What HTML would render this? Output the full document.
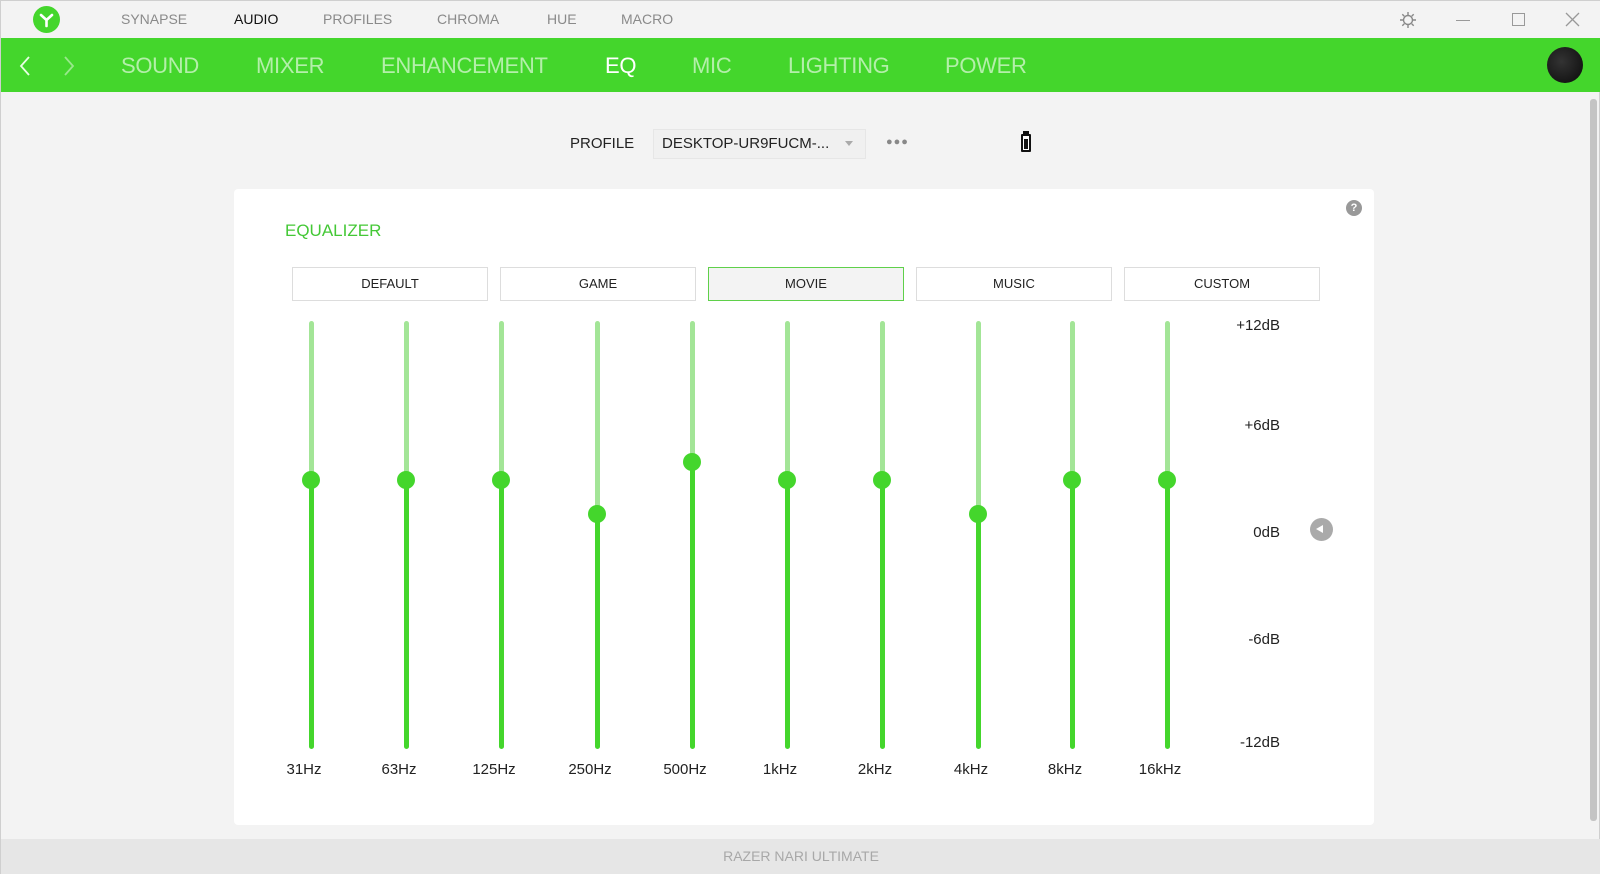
<!DOCTYPE html>
<html><head><meta charset="utf-8"><style>
*{margin:0;padding:0;box-sizing:border-box}
body{width:1600px;height:874px;background:#f3f3f3;font-family:"Liberation Sans",sans-serif;position:relative;overflow:hidden;border:1px solid #cfcfcf}
.a{position:absolute;white-space:nowrap}
.tb{top:0;left:0;width:1600px;height:37px;background:#f3f3f3}
.tt{top:10px;font-size:14px;color:#8a8a8a}
.gb{top:37px;left:0;width:1600px;height:54px;background:#44d62c}
.gt{top:52px;font-size:22px;color:rgba(255,255,255,.6);letter-spacing:-0.3px}
.card{left:233px;top:188px;width:1140px;height:636px;background:#fff;border-radius:4px}
.btn{top:266px;width:196px;height:34px;border:1.5px solid #ddd;background:#fff;font-size:13px;color:#222;text-align:center;line-height:31px}
.tr{width:5px;border-radius:3px}
.kn{width:18px;height:18px;border-radius:50%;background:#44d62c}
.lb{font-size:15px;color:#222;top:760px;width:60px;text-align:center}
.db{font-size:15px;color:#222;right:319px;text-align:right}
</style></head><body>
<div class="a tb"></div>
<div class="a" style="left:32px;top:5px;width:27px;height:27px;border-radius:50%;background:#44d62c"></div>
<svg class="a" style="left:36px;top:9px" width="19" height="19" viewBox="0 0 19 19"><path d="M9.5 10 L9.5 16 M9.5 10 L4 5 M9.5 10 L15 5" stroke="#fff" stroke-width="2.6" fill="none" stroke-linecap="round"/></svg>
<div class="a tt" style="left:120px">SYNAPSE</div>
<div class="a tt" style="left:233px;color:#111">AUDIO</div>
<div class="a tt" style="left:322px">PROFILES</div>
<div class="a tt" style="left:436px">CHROMA</div>
<div class="a tt" style="left:546px">HUE</div>
<div class="a tt" style="left:620px">MACRO</div>
<svg class="a" style="left:1398px;top:10px" width="18" height="18" viewBox="0 0 18 18"><circle cx="9" cy="9" r="4.5" fill="none" stroke="#888" stroke-width="1.4"/><path d="M9 1v3M9 14v3M1 9h3M14 9h3M3.3 3.3l2 2M12.7 12.7l2 2M3.3 14.7l2-2M12.7 5.3l2-2" stroke="#888" stroke-width="1.4"/></svg>
<div class="a" style="left:1455px;top:19px;width:14px;height:1px;background:#999"></div>
<div class="a" style="left:1511px;top:12px;width:13px;height:13px;border:1.2px solid #999"></div>
<svg class="a" style="left:1564px;top:11px" width="15" height="15"><path d="M1 1L14 14M14 1L1 14" stroke="#999" stroke-width="1.3"/></svg>
<div class="a gb"></div>
<svg class="a" style="left:17px;top:54px" width="14" height="22"><path d="M11 2L3 11L11 20" stroke="#e8ffe4" stroke-width="1.8" fill="none"/></svg>
<svg class="a" style="left:61px;top:54px" width="14" height="22"><path d="M3 2L11 11L3 20" stroke="rgba(255,255,255,.45)" stroke-width="1.8" fill="none"/></svg>
<div class="a gt" style="left:120px">SOUND</div>
<div class="a gt" style="left:255px">MIXER</div>
<div class="a gt" style="left:380px">ENHANCEMENT</div>
<div class="a gt" style="left:604px;color:#fff">EQ</div>
<div class="a gt" style="left:691px">MIC</div>
<div class="a gt" style="left:787px">LIGHTING</div>
<div class="a gt" style="left:944px">POWER</div>
<div class="a" style="left:1546px;top:46px;width:36px;height:36px;border-radius:50%;background:radial-gradient(circle at 40% 40%,#333,#0a0a0a)"></div>
<div class="a" style="left:569px;top:134px;font-size:15px;color:#222">PROFILE</div>
<div class="a" style="left:652px;top:128px;width:213px;height:30px;background:#f0f0f0;border:1px solid #e6e6e6"></div>
<div class="a" style="left:661px;top:134px;font-size:15px;color:#222">DESKTOP-UR9FUCM-...</div>
<div class="a" style="left:844px;top:140px;border-left:4px solid transparent;border-right:4px solid transparent;border-top:5px solid #aaa"></div>
<div class="a" style="left:885px;top:135px;font-size:11px;color:#888;letter-spacing:1px">●●●</div>
<div class="a" style="left:1020px;top:133px;width:10px;height:18px;border:2px solid #111;border-radius:1px;background:#fff"></div>
<div class="a" style="left:1023px;top:138px;width:4px;height:10px;background:#111"></div>
<div class="a" style="left:1022px;top:130px;width:6px;height:3px;background:#111"></div>
<div class="a" style="left:1589px;top:98px;width:7px;height:722px;background:#c4c4c4;border-radius:3px"></div>
<div class="a card"></div>
<div class="a" style="left:284px;top:220px;font-size:17px;color:#44c836">EQUALIZER</div>
<div class="a" style="left:1345px;top:199px;width:16px;height:16px;border-radius:50%;background:#999;color:#fff;font-size:11px;text-align:center;line-height:16px;font-weight:bold">?</div>
<div class="a btn" style="left:291px">DEFAULT</div>
<div class="a btn" style="left:499px">GAME</div>
<div class="a btn" style="left:707px;border-color:#5fd04a;background:#f3f3f3">MOVIE</div>
<div class="a btn" style="left:915px">MUSIC</div>
<div class="a btn" style="left:1123px">CUSTOM</div>
<div id="eq"></div>
<div class="a db" style="top:316px">+12dB</div>
<div class="a db" style="top:416px">+6dB</div>
<div class="a db" style="top:523px">0dB</div>
<div class="a db" style="top:630px">-6dB</div>
<div class="a db" style="top:733px">-12dB</div>
<div class="a" style="left:1309px;top:517px;width:23px;height:23px;border-radius:50%;background:#aaa"></div>
<div class="a" style="left:1315px;top:524px;border-top:4.5px solid transparent;border-bottom:4.5px solid transparent;border-right:7px solid #fff"></div>
<div class="a" style="left:0;top:838px;width:1600px;height:35px;background:#e6e6e6"></div>
<div class="a" style="left:0;top:847px;width:1600px;text-align:center;font-size:14px;color:#a8a8a8">RAZER NARI ULTIMATE</div>
<script>
var xs=[310,405,500,596,691,786,881,977,1071,1166],ys=[479,479,479,513,461,479,479,513,479,479],
ls=["31Hz","63Hz","125Hz","250Hz","500Hz","1kHz","2kHz","4kHz","8kHz","16kHz"],h="";
for(var i=0;i<10;i++){var x=xs[i],y=ys[i];
h+='<div class="a tr" style="left:'+(x-2.5)+'px;top:320px;height:'+(y-320)+'px;background:#a3e597"></div>';
h+='<div class="a tr" style="left:'+(x-2.5)+'px;top:'+y+'px;height:'+(748-y)+'px;background:#44d62c"></div>';
h+='<div class="a kn" style="left:'+(x-9)+'px;top:'+(y-9)+'px"></div>';
h+='<div class="a lb" style="left:'+(x-37)+'px">'+ls[i]+'</div>';}
document.getElementById("eq").innerHTML=h;
</script>
</body></html>
